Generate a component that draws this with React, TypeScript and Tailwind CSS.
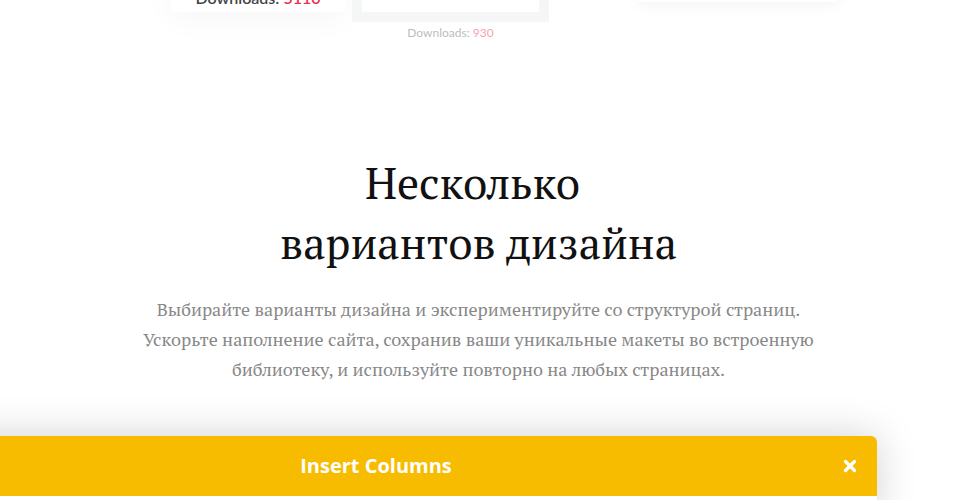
import { X } from "lucide-react";

const serif = "font-['PT_Serif','Liberation_Serif',serif]";

function TopCards() {
  return (
    <div className="flex h-[60px] items-start overflow-hidden pl-[170px]">
      <div className="-mt-[40px] flex h-[52px] w-[176px] items-end justify-center rounded-md bg-white pb-[4px] shadow-[0_8px_30px_rgba(0,0,0,0.035)]">
        <p className="font-['Lato',sans-serif] text-[16px] leading-[20px] font-semibold text-[#444]">
          Downloads: <span className="text-[#ec2f4b]">5110</span>
        </p>
      </div>
      <div className="ml-[6px] flex w-[197px] flex-col items-center">
        <div className="-mt-[20px] w-full bg-[#f5f7f7] px-[10px] pb-[10px] pt-[20px]">
          <div className="h-[12px] bg-white" />
        </div>
        <p className="mt-[2px] font-['Lato',sans-serif] text-[12px] text-[#bdbdbd]">
          Downloads: <span className="text-[#f6a3b2]">930</span>
        </p>
      </div>
      <div className="-mt-[40px] ml-[86px] h-[42px] w-[205px] rounded-md bg-white shadow-[0_4px_14px_rgba(0,0,0,0.04)]" />
    </div>
  );
}

export default function App() {
  return (
    <div className="relative h-[500px] w-[965px] overflow-hidden bg-white">
      <TopCards />

      <section className="flex flex-col items-center pr-[8px] pt-[93px]">
        <h2
          className={`${serif} text-center text-[44px] leading-[60px] font-normal text-[#111]`}
        >
          <span className="block pr-[12px]">Несколько</span>
          вариантов дизайна
        </h2>
        <p
          className={`${serif} mt-[21px] w-[700px] text-center text-[18px] leading-[30px] text-[#888]`}
        >
          Выбирайте варианты дизайна и экспериментируйте со структурой страниц.
          Ускорьте наполнение сайта, сохранив ваши уникальные макеты во встроенную
          библиотеку, и используйте повторно на любых страницах.
        </p>
      </section>

      <div className="absolute -left-[125px] top-[436px] w-[1002px] overflow-hidden rounded-tr-[6px] bg-white shadow-[0_0_40px_rgba(0,0,0,0.18)]">
        <div className="relative flex h-[60px] items-center justify-center bg-[#f7bc00]">
          <span className="font-['Open_Sans',sans-serif] text-[20px] font-bold text-white">
            Insert Columns
          </span>
          <button
            type="button"
            className="absolute right-[18px] top-1/2 -translate-y-1/2 text-white"
          >
            <X className="size-[18px]" strokeWidth={4.5} />
          </button>
        </div>
        <div className="h-[20px] bg-white" />
      </div>
    </div>
  );
}
